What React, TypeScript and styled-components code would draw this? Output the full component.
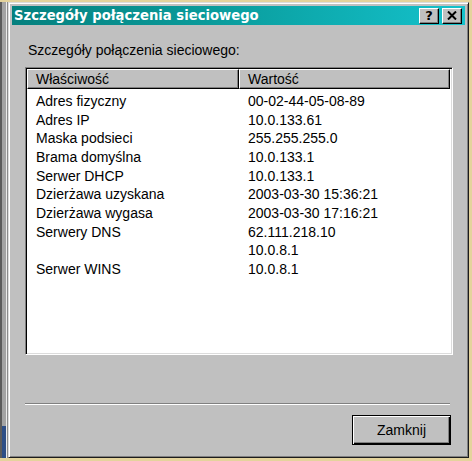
import React from "react";
import styled, { createGlobalStyle } from "styled-components";

const GlobalStyle = createGlobalStyle`
  html, body { margin: 0; padding: 0; background: #e4d39c; overflow: hidden; }
  #root { width: 472px; height: 461px; }
`;

const Screen = styled.div`
  display: flex;
  width: 472px;
  height: 461px;
  box-sizing: border-box;
  padding-top: 2px;
  background: #e4d39c;
`;

const DesktopEdge = styled.div`
  flex: none;
  width: 8px;
  height: 456px;
  background:
    linear-gradient(to bottom, transparent 0 424px, #2e4f86 424px) 2px 0 / 4px 100% no-repeat,
    linear-gradient(to right, #5c5c5c 0 2px, #a4a4a4 2px 6px, #ececec 6px 7px, #8c8c8c 7px 8px);
`;

const Window = styled.div`
  flex: none;
  width: 461px;
  height: 456px;
  box-sizing: border-box;
  background: #c0c0c0;
  border: 1px solid;
  border-color: #dcdcdc #1c1c1c #1c1c1c #dcdcdc;
  box-shadow: inset 1px 1px #ffffff, inset -1px -1px #808080;
  padding: 3px;
  display: flex;
  flex-direction: column;
`;

const TitleBar = styled.div`
  flex: none;
  height: 19px;
  display: flex;
  align-items: center;
  padding: 0 3px 0 2px;
  background: linear-gradient(to right, #05807e 0%, #0a9c9c 45%, #14c2cc 100%);
`;

const TitleText = styled.div`
  flex: 1;
  color: #ffffff;
  font-family: "DejaVu Sans", Verdana, sans-serif;
  font-weight: bold;
  font-size: 13.2px;
  line-height: 19px;
  white-space: nowrap;
`;

const TitleButtons = styled.div`
  display: flex;
  gap: 3px;
`;

const CaptionButton = styled.div`
  width: 20px;
  height: 16px;
  box-sizing: border-box;
  background: #c0c0c0;
  border: 1px solid;
  border-color: #ffffff #000000 #000000 #ffffff;
  box-shadow: inset -1px -1px #808080;
  display: flex;
  align-items: center;
  justify-content: center;
  font-family: "DejaVu Sans", Verdana, sans-serif;
  font-weight: bold;
  font-size: 13px;
  line-height: 13px;
  color: #000;
`;

const Client = styled.div`
  flex: 1;
  display: flex;
  flex-direction: column;
  padding: 17px 12px 0 13px;
  font-family: "Liberation Sans", Arial, sans-serif;
  font-size: 14px;
  color: #000;
`;

const GroupLabel = styled.div`
  line-height: 16px;
  margin-left: 3px;
  white-space: nowrap;
`;

const ListBox = styled.div`
  margin-top: 9px;
  height: 288px;
  box-sizing: border-box;
  background: #ffffff;
  border: 1px solid;
  border-color: #808080 #ffffff #ffffff #808080;
  box-shadow: inset 1px 1px #000000, inset -1px -1px #dcdcdc;
  padding: 1px;
`;

const Columns = styled.div`
  display: grid;
  grid-template-columns: 212px 211px;
`;

const HeaderCell = styled.div`
  height: 20px;
  box-sizing: border-box;
  border: 1px solid;
  border-color: #ffffff #000000 #000000 #ffffff;
  box-shadow: inset -1px -1px #808080;
  background: #c0c0c0;
  padding-left: 8px;
  line-height: 18px;
  white-space: nowrap;
`;

const Rows = styled.div`
  padding-top: 3px;
`;

const Cell = styled.div`
  height: 18.67px;
  line-height: 18.67px;
  padding-left: 9px;
  white-space: nowrap;
`;

const Separator = styled.div`
  margin-top: 48px;
  width: 425px;
  height: 1px;
  background: #808080;
  border-bottom: 1px solid #ffffff;
`;

const Footer = styled.div`
  display: flex;
  justify-content: flex-end;
  margin-top: 10px;
  padding-right: 2px;
`;

const DefaultButton = styled.button`
  width: 99px;
  height: 30px;
  box-sizing: border-box;
  background: #c0c0c0;
  border: 1px solid #000000;
  box-shadow: inset 1px 1px #ffffff, inset -1px -1px #000000, inset -2px -2px #808080;
  font-family: "Liberation Sans", Arial, sans-serif;
  font-size: 14px;
  color: #000;
  padding: 0;
`;

const rows: [string, string][] = [
  ["Adres fizyczny", "00-02-44-05-08-89"],
  ["Adres IP", "10.0.133.61"],
  ["Maska podsieci", "255.255.255.0"],
  ["Brama domyślna", "10.0.133.1"],
  ["Serwer DHCP", "10.0.133.1"],
  ["Dzierżawa uzyskana", "2003-03-30 15:36:21"],
  ["Dzierżawa wygasa", "2003-03-30 17:16:21"],
  ["Serwery DNS", "62.111.218.10"],
  ["", "10.0.8.1"],
  ["Serwer WINS", "10.0.8.1"],
];

const CloseGlyph = () => (
  <svg width="10" height="9" viewBox="0 0 10 9">
    <path d="M1 0.5 L9 8.5 M9 0.5 L1 8.5" stroke="#000" strokeWidth="2" />
  </svg>
);

export default function App() {
  return (
    <>
      <GlobalStyle />
      <Screen>
        <DesktopEdge />
        <Window>
          <TitleBar>
            <TitleText>Szczegóły połączenia sieciowego</TitleText>
            <TitleButtons>
              <CaptionButton>?</CaptionButton>
              <CaptionButton>
                <CloseGlyph />
              </CaptionButton>
            </TitleButtons>
          </TitleBar>
          <Client>
            <GroupLabel>Szczegóły połączenia sieciowego:</GroupLabel>
            <ListBox>
              <Columns>
                <HeaderCell>Właściwość</HeaderCell>
                <HeaderCell>Wartość</HeaderCell>
              </Columns>
              <Rows>
                {rows.map(([k, v], i) => (
                  <Columns key={i}>
                    <Cell>{k}</Cell>
                    <Cell>{v}</Cell>
                  </Columns>
                ))}
              </Rows>
            </ListBox>
            <Separator />
            <Footer>
              <DefaultButton>Zamknij</DefaultButton>
            </Footer>
          </Client>
        </Window>
      </Screen>
    </>
  );
}
